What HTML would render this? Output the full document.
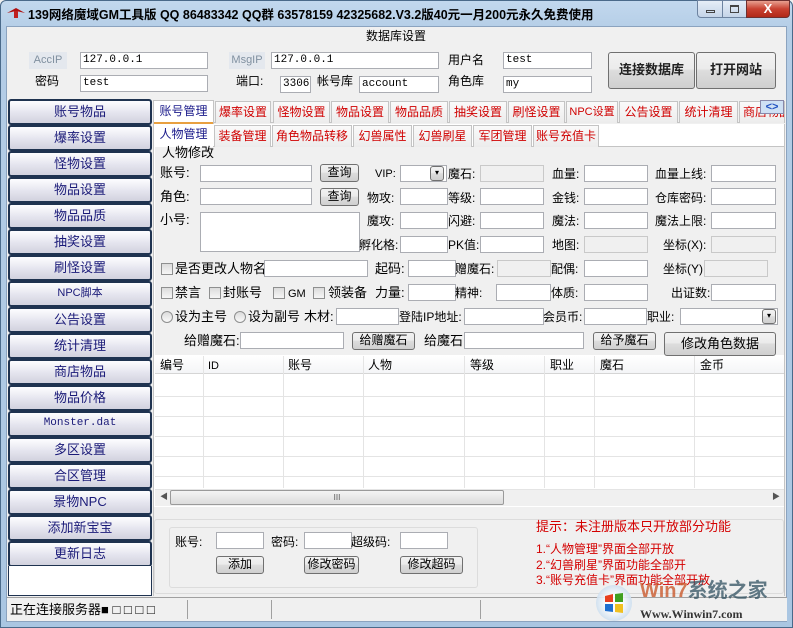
<!DOCTYPE html>
<html><head><meta charset="utf-8"><style>
*{margin:0;padding:0;box-sizing:border-box}
body{width:793px;height:628px;overflow:hidden;background:#f0f0f0;font-family:"Liberation Sans","Noto Sans CJK SC",sans-serif;font-size:12px;color:#000;position:relative}
.a{position:absolute;white-space:nowrap;line-height:14px}
.in{position:absolute;background:#fff;border:1px solid #abadb3;height:17px;font-family:"Liberation Mono","Noto Sans CJK SC",monospace;font-size:11px;line-height:15px;padding-left:2px}
.g{background:#f0f0f0;border-color:#c9c9c9}
.bt{position:absolute;border:1px solid #707070;border-radius:3px;background:linear-gradient(#f2f2f2,#ebebeb 45%,#dddddd 50%,#cfcfcf);text-align:center;line-height:15px;height:18px}
.nav{position:absolute;left:8px;width:144px;height:26px;border:2px solid #1f3350;border-radius:3px;background:linear-gradient(#fdfdff,#e4e4ee 55%,#d2d2de);color:#1a1a78;text-align:center;line-height:21px;font-size:13px}
.tab{position:absolute;height:22px;border:1px solid #c4c4c4;border-bottom:none;background:linear-gradient(#fafafa,#ececec);color:#d00000;text-align:center;line-height:20px;font-size:12px;white-space:nowrap;overflow:hidden}
.cb{position:absolute;width:12px;height:12px;border:1px solid #8e8f8f;background:linear-gradient(#dcdcdc,#f6f6f6)}
.rd{position:absolute;width:12px;height:12px;border:1px solid #8e8f8f;border-radius:50%;background:linear-gradient(#dcdcdc,#fafafa)}
.red{color:#d40000}
</style></head><body>
<div style="position:absolute;left:0;top:0;width:793px;height:628px;background:linear-gradient(#c2d8ee,#b4cde6 30px,#aac6e2);border:1px solid #4a6a8a;border-radius:6px 6px 0 0"></div>
<div style="position:absolute;left:6px;top:26px;width:781px;height:596px;background:#f0f0f0;border:1px solid #8ba3bf"></div>
<svg style="position:absolute;left:6px;top:6px" width="20" height="14"><path d="M1 7 L10 2 L19 7 L10 5 Z" fill="#b01010"/><path d="M8 5h4v7h-4z" fill="#c02020"/></svg>
<div class="a" style="left:28px;top:8px;font-weight:bold;font-size:12.5px">139网络魔域GM工具版 QQ 86483342 QQ群 63578159 42325682.V3.2版40元一月200元永久免费使用</div>
<div style="position:absolute;left:697px;top:0;width:26px;height:18px;border:1px solid #6d83a0;border-radius:0 0 0 4px;background:linear-gradient(#e6eef8,#c4d4e8)"><div style="position:absolute;left:8px;top:9px;width:9px;height:3px;border:1px solid #444"></div></div>
<div style="position:absolute;left:722px;top:0;width:25px;height:18px;border:1px solid #6d83a0;background:linear-gradient(#e6eef8,#c4d4e8)"><div style="position:absolute;left:7px;top:4px;width:9px;height:8px;border:1px solid #444;border-top-width:2px"></div></div>
<div style="position:absolute;left:746px;top:0;width:44px;height:18px;border:1px solid #6d3030;border-radius:0 0 4px 0;background:linear-gradient(#e8a090,#c84030 50%,#b02818);color:#fff;text-align:center;font-weight:bold;line-height:16px;font-size:13px">X</div>

<div class="a" style="left:366px;top:29px">数据库设置</div>
<div class="a" style="left:29px;top:52px;width:38px;height:17px;background:#e4e8ee;color:#8090a0;font-size:11px;text-align:center;line-height:17px">AccIP</div>
<div class="in" style="left:80px;top:52px;width:128px">127.0.0.1</div>
<div class="a" style="left:35px;top:74px">密码</div>
<div class="in" style="left:80px;top:75px;width:128px">test</div>
<div class="a" style="left:229px;top:52px;width:36px;height:17px;background:#e4e8ee;color:#8090a0;font-size:11px;text-align:center;line-height:17px">MsgIP</div>
<div class="in" style="left:271px;top:52px;width:168px">127.0.0.1</div>
<div class="a" style="left:236px;top:74px">端口:</div>
<div class="in" style="left:280px;top:76px;width:31px">3306</div>
<div class="a" style="left:317px;top:74px">帐号库</div>
<div class="in" style="left:359px;top:76px;width:80px">account</div>
<div class="a" style="left:448px;top:53px">用户名</div>
<div class="in" style="left:503px;top:52px;width:89px">test</div>
<div class="a" style="left:448px;top:74px">角色库</div>
<div class="in" style="left:503px;top:76px;width:89px">my</div>
<div class="bt" style="left:608px;top:52px;width:87px;height:37px;line-height:34px;font-weight:bold;font-size:13px;color:#222">连接数据库</div>
<div class="bt" style="left:696px;top:52px;width:80px;height:37px;line-height:34px;font-weight:bold;font-size:13px;color:#222">打开网站</div>

<div class="nav" style="top:99px">账号物品</div>
<div class="nav" style="top:125px">爆率设置</div>
<div class="nav" style="top:151px">怪物设置</div>
<div class="nav" style="top:177px">物品设置</div>
<div class="nav" style="top:203px">物品品质</div>
<div class="nav" style="top:229px">抽奖设置</div>
<div class="nav" style="top:255px">刷怪设置</div>
<div class="nav" style="top:281px;font-size:11px">NPC脚本</div>
<div class="nav" style="top:307px">公告设置</div>
<div class="nav" style="top:333px">统计清理</div>
<div class="nav" style="top:359px">商店物品</div>
<div class="nav" style="top:385px">物品价格</div>
<div class="nav" style="top:411px;font-family:'Liberation Mono',monospace;font-size:11px">Monster.dat</div>
<div class="nav" style="top:437px">多区设置</div>
<div class="nav" style="top:463px">合区管理</div>
<div class="nav" style="top:489px">景物NPC</div>
<div class="nav" style="top:515px">添加新宝宝</div>
<div class="nav" style="top:541px">更新日志</div>
<div style="position:absolute;left:8px;top:566px;width:144px;height:30px;background:#fff;border:1px solid #1f3350;border-top:none"></div>

<div style="position:absolute;left:153px;top:122px;width:632px;height:1px;background:#c4c4c4"></div>
<div class="tab" style="left:153px;top:100px;width:61px;height:24px;background:#fff;color:#1a1a8a">账号管理</div>
<div class="tab" style="left:215px;top:101px;width:56px">爆率设置</div>
<div class="tab" style="left:273px;top:101px;width:57px">怪物设置</div>
<div class="tab" style="left:331px;top:101px;width:58px">物品设置</div>
<div class="tab" style="left:390px;top:101px;width:58px">物品品质</div>
<div class="tab" style="left:449px;top:101px;width:58px">抽奖设置</div>
<div class="tab" style="left:508px;top:101px;width:57px">刷怪设置</div>
<div class="tab" style="left:566px;top:101px;width:52px;font-size:11px">NPC设置</div>
<div class="tab" style="left:619px;top:101px;width:59px">公告设置</div>
<div class="tab" style="left:679px;top:101px;width:59px">统计清理</div>
<div class="tab" style="left:739px;top:101px;width:46px;text-align:left;padding-left:3px">商店物品</div>
<div style="position:absolute;left:760px;top:100px;width:24px;height:14px;background:#cfe0f4;border:1px solid #88a;color:#2050c0;font-size:11px;line-height:12px;text-align:center;font-weight:bold">&lt;&gt;</div>

<div style="position:absolute;left:153px;top:124px;width:632px;height:472px;background:#fff;border:1px solid #c4c4c4;border-top:none"></div>
<div style="position:absolute;left:154px;top:146px;width:630px;height:1px;background:#c4c4c4"></div>
<div style="position:absolute;left:154px;top:122px;width:59px;height:2px;background:#e8a040"></div>
<div class="tab" style="left:154px;top:124px;width:59px;background:#fff;border:none;color:#1a1a8a;height:24px">人物管理</div>
<div class="tab" style="left:214px;top:125px;width:57px">装备管理</div>
<div class="tab" style="left:272px;top:125px;width:80px">角色物品转移</div>
<div class="tab" style="left:353px;top:125px;width:59px">幻兽属性</div>
<div class="tab" style="left:413px;top:125px;width:59px">幻兽刷星</div>
<div class="tab" style="left:473px;top:125px;width:59px">军团管理</div>
<div class="tab" style="left:533px;top:125px;width:66px">账号充值卡</div>

<div style="position:absolute;left:155px;top:147px;width:629px;height:208px;background:#f0f0f0"></div>
<div class="a" style="left:162px;top:146px;font-size:13px">人物修改</div>

<div class="a" style="left:160px;top:166px;font-size:13px">账号:</div><div class="in" style="left:200px;top:165px;width:112px"></div>
<div class="bt" style="left:320px;top:164px;width:39px">查询</div>
<div class="a" style="left:375px;top:167px;font-size:11px">VIP:</div>
<div class="in" style="left:400px;top:165px;width:47px"></div><div class="bt" style="left:430px;top:166px;width:14px;height:15px;font-size:8px;line-height:12px">▾</div>
<div class="a" style="left:448px;top:167px">魔石:</div><div class="in g" style="left:480px;top:165px;width:64px"></div>
<div class="a" style="left:552px;top:167px">血量:</div><div class="in" style="left:584px;top:165px;width:64px"></div>
<div class="a" style="left:655px;top:167px">血量上线:</div><div class="in" style="left:711px;top:165px;width:65px"></div>

<div class="a" style="left:160px;top:190px;font-size:13px">角色:</div><div class="in" style="left:200px;top:188px;width:112px"></div>
<div class="bt" style="left:320px;top:188px;width:39px">查询</div>
<div class="a" style="left:367px;top:191px">物攻:</div><div class="in" style="left:400px;top:188px;width:48px"></div>
<div class="a" style="left:448px;top:191px">等级:</div><div class="in" style="left:480px;top:188px;width:64px"></div>
<div class="a" style="left:552px;top:191px">金钱:</div><div class="in" style="left:584px;top:188px;width:64px"></div>
<div class="a" style="left:655px;top:191px">仓库密码:</div><div class="in" style="left:711px;top:188px;width:65px"></div>

<div class="a" style="left:160px;top:213px;font-size:13px">小号:</div><div class="in" style="left:200px;top:212px;width:160px;height:40px"></div>
<div class="a" style="left:367px;top:214px">魔攻:</div><div class="in" style="left:400px;top:212px;width:48px"></div>
<div class="a" style="left:448px;top:214px">闪避:</div><div class="in" style="left:480px;top:212px;width:64px"></div>
<div class="a" style="left:552px;top:214px">魔法:</div><div class="in" style="left:584px;top:212px;width:64px"></div>
<div class="a" style="left:655px;top:214px">魔法上限:</div><div class="in" style="left:711px;top:212px;width:65px"></div>

<div class="a" style="left:359px;top:238px">孵化格:</div><div class="in" style="left:400px;top:236px;width:48px"></div>
<div class="a" style="left:448px;top:238px">PK值:</div><div class="in" style="left:480px;top:236px;width:64px"></div>
<div class="a" style="left:552px;top:238px">地图:</div><div class="in g" style="left:584px;top:236px;width:64px"></div>
<div class="a" style="left:663px;top:238px">坐标(X):</div><div class="in g" style="left:711px;top:236px;width:65px"></div>

<div class="cb" style="left:161px;top:263px"></div><div class="a" style="left:175px;top:262px;font-size:13px">是否更改人物名</div>
<div class="in" style="left:264px;top:260px;width:104px"></div>
<div class="a" style="left:375px;top:262px;font-size:13px">起码:</div><div class="in" style="left:408px;top:260px;width:48px"></div>
<div class="a" style="left:455px;top:262px">赠魔石:</div><div class="in g" style="left:497px;top:260px;width:54px"></div>
<div class="a" style="left:551px;top:262px">配偶:</div><div class="in" style="left:584px;top:260px;width:64px"></div>
<div class="a" style="left:663px;top:262px">坐标(Y):</div><div class="in g" style="left:704px;top:260px;width:64px"></div>

<div class="cb" style="left:161px;top:287px"></div><div class="a" style="left:175px;top:286px;font-size:13px">禁言</div>
<div class="cb" style="left:209px;top:287px"></div><div class="a" style="left:223px;top:286px;font-size:13px">封账号</div>
<div class="cb" style="left:273px;top:287px"></div><div class="a" style="left:288px;top:287px;font-size:11px">GM</div>
<div class="cb" style="left:313px;top:287px"></div><div class="a" style="left:328px;top:286px;font-size:13px">领装备</div>
<div class="a" style="left:375px;top:286px;font-size:13px">力量:</div><div class="in" style="left:408px;top:284px;width:48px"></div>
<div class="a" style="left:455px;top:286px">精神:</div><div class="in" style="left:496px;top:284px;width:55px"></div>
<div class="a" style="left:551px;top:286px">体质:</div><div class="in" style="left:584px;top:284px;width:64px"></div>
<div class="a" style="left:671px;top:286px">出证数:</div><div class="in" style="left:711px;top:284px;width:65px"></div>

<div class="rd" style="left:161px;top:311px"></div><div class="a" style="left:175px;top:310px;font-size:13px">设为主号</div>
<div class="rd" style="left:234px;top:311px"></div><div class="a" style="left:248px;top:310px;font-size:13px">设为副号</div>
<div class="a" style="left:304px;top:310px;font-size:13px">木材:</div><div class="in" style="left:336px;top:308px;width:63px"></div>
<div class="a" style="left:399px;top:310px">登陆IP地址:</div><div class="in" style="left:464px;top:308px;width:80px"></div>
<div class="a" style="left:543px;top:310px">会员币:</div><div class="in" style="left:584px;top:308px;width:63px"></div>
<div class="a" style="left:647px;top:310px">职业:</div><div class="in" style="left:680px;top:308px;width:98px"></div><div class="bt" style="left:762px;top:309px;width:14px;height:15px;font-size:8px;line-height:12px">▾</div>

<div class="a" style="left:184px;top:334px;font-size:13px">给赠魔石:</div><div class="in" style="left:240px;top:332px;width:104px"></div>
<div class="bt" style="left:352px;top:332px;width:63px">给赠魔石</div>
<div class="a" style="left:424px;top:334px;font-size:13px">给魔石:</div><div class="in" style="left:464px;top:332px;width:120px"></div>
<div class="bt" style="left:593px;top:332px;width:63px">给予魔石</div>
<div class="bt" style="left:664px;top:332px;width:112px;height:24px;line-height:21px;font-size:13px">修改角色数据</div>

<div style="position:absolute;left:155px;top:356px;width:629px;height:18px;background:linear-gradient(#fff,#f4f5f7);border-bottom:1px solid #d5d5d5"></div>
<div class="a" style="left:160px;top:358px">编号</div>
<div class="a" style="left:208px;top:359px;font-size:11px">ID</div>
<div class="a" style="left:288px;top:358px">账号</div>
<div class="a" style="left:368px;top:358px">人物</div>
<div class="a" style="left:470px;top:358px">等级</div>
<div class="a" style="left:550px;top:358px">职业</div>
<div class="a" style="left:600px;top:358px">魔石</div>
<div class="a" style="left:700px;top:358px">金币</div>
<svg style="position:absolute;left:155px;top:356px" width="629" height="133">
<g stroke="#e4e4e4" stroke-width="1">
<path d="M48.5 0V132M128.5 0V132M208.5 0V132M309.5 0V132M389.5 0V132M439.5 0V132M539.5 0V132"/>
<path d="M0 40.5H629M0 60.5H629M0 80.5H629M0 100.5H629M0 120.5H629"/>
</g></svg>
<div style="position:absolute;left:155px;top:489px;width:629px;height:17px;background:#f0f0f0;border-top:1px solid #e4e4e4"></div>
<div class="a" style="left:160px;top:490px;font-size:8px;color:#555">◀</div>
<div style="position:absolute;left:170px;top:490px;width:334px;height:15px;border:1px solid #9a9a9a;border-radius:2px;background:linear-gradient(#f4f4f4,#dcdcdc);text-align:center;font-size:8px;line-height:13px;color:#555">III</div>
<div class="a" style="left:772px;top:490px;font-size:8px;color:#555">▶</div>

<div style="position:absolute;left:154px;top:507px;width:630px;height:89px;background:#f0f0f0"></div>
<div style="position:absolute;left:154px;top:519px;width:630px;height:75px;border:1px solid #dcdcdc;border-radius:3px"></div>
<div style="position:absolute;left:169px;top:527px;width:309px;height:61px;border:1px solid #dcdcdc;border-radius:3px"></div>
<div class="a" style="left:175px;top:535px">账号:</div><div class="in" style="left:216px;top:532px;width:48px"></div>
<div class="a" style="left:271px;top:535px">密码:</div><div class="in" style="left:304px;top:532px;width:48px"></div>
<div class="a" style="left:351px;top:535px">超级码:</div><div class="in" style="left:400px;top:532px;width:48px"></div>
<div class="bt" style="left:216px;top:556px;width:48px">添加</div>
<div class="bt" style="left:304px;top:556px;width:55px">修改密码</div>
<div class="bt" style="left:400px;top:556px;width:63px">修改超码</div>
<div class="a red" style="left:536px;top:520px;font-size:13px">提示：未注册版本只开放部分功能</div>
<div class="a red" style="left:536px;top:542px">1.“人物管理”界面全部开放</div>
<div class="a red" style="left:536px;top:558px">2.“幻兽刷星”界面功能全部开</div>
<div class="a red" style="left:536px;top:573px">3.“账号充值卡”界面功能全部开放</div>

<div style="position:absolute;left:7px;top:597px;width:780px;height:24px;background:#f0f0f0;border-top:1px solid #a0a0a0"></div>
<div style="position:absolute;left:187px;top:600px;width:1px;height:19px;background:#a0a0a0"></div>
<div style="position:absolute;left:271px;top:600px;width:1px;height:19px;background:#a0a0a0"></div>
<div style="position:absolute;left:480px;top:600px;width:1px;height:19px;background:#a0a0a0"></div>
<div class="a" style="left:10px;top:603px;font-size:13px">正在连接服务器■ □ □ □ □</div>

<div style="position:absolute;left:596px;top:585px;width:36px;height:36px;border-radius:50%;background:radial-gradient(circle,#fff 30%,#cfe0f0 70%,rgba(255,255,255,0));opacity:.9"></div>
<svg style="position:absolute;left:603px;top:592px" width="22" height="22"><path d="M2 4l8-2v8H2z" fill="#e84020"/><path d="M12 2l8-1v9h-8z" fill="#40a020"/><path d="M2 12h8v8l-8-1z" fill="#2070d0"/><path d="M12 12h8v9l-8-1z" fill="#f0c020"/></svg>
<div class="a" style="left:640px;top:580px;font-size:20px;font-weight:bold;color:#c85020;opacity:.75;line-height:22px">Win7<span style="color:#305060">系统之家</span></div>
<div class="a" style="left:640px;top:607px;font-family:'Liberation Serif',serif;font-weight:bold;font-size:12px;color:#333">Www.Winwin7.com</div>
</body></html>
